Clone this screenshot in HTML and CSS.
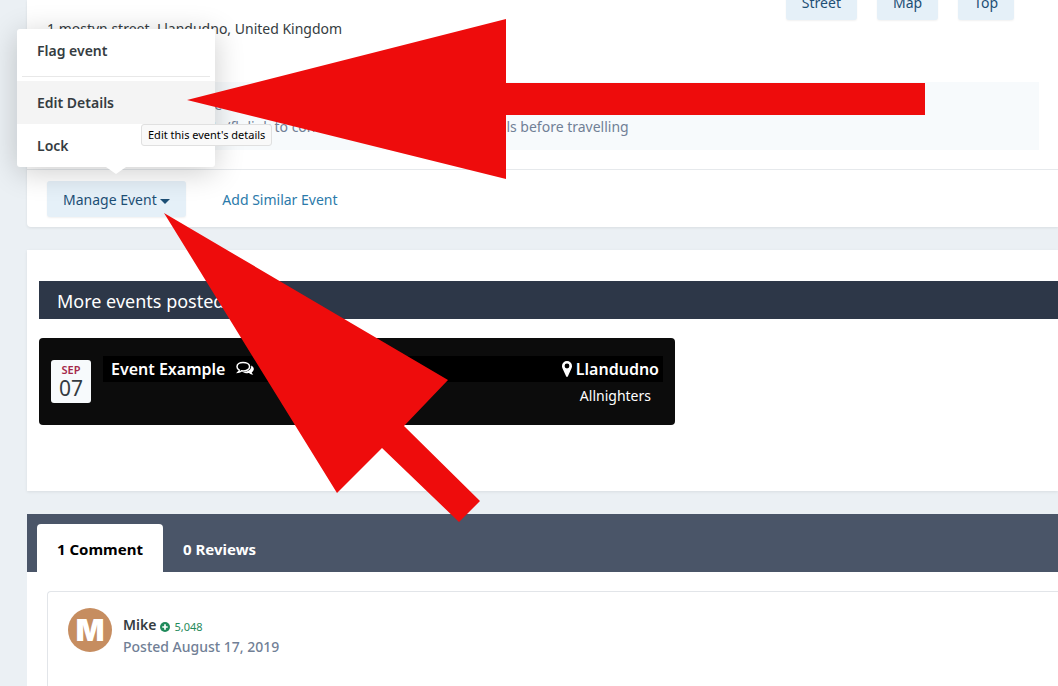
FILE: index.html
```html
<!DOCTYPE html>
<html lang="en">
	<head>
		<meta charset="UTF-8" />
		<meta name="viewport" content="width=device-width, initial-scale=1.0" />
		<title>Event Example</title>
		<link rel="stylesheet" href="styles.css">
	</head>
	<body>
		<main class="page">
			<section class="panel event">
				<nav class="links">
					<a class="button" href="#street">Street</a>
					<a class="button" href="#map">Map</a>
					<a class="button" href="#top">Top</a>
				</nav>
				<p class="address">1 mostyn street, Llandudno, United Kingdom</p>
				<div class="notice">
					<p>Events can change or be cancelled</p>
					<p>Please check the website/fb link to confirm the event or venue details before travelling</p>
				</div>
				<div class="event-footer">
					<div class="manage">
						<button class="button" type="button">Manage Event <span class="caret"></span></button>
						<div class="menu">
							<a href="#flag">Flag event</a>
							<hr />
							<a class="active" href="#edit">Edit Details</a>
							<a href="#lock">Lock</a>
							<span class="tooltip">Edit this event's details</span>
						</div>
					</div>
					<a class="similar" href="#similar">Add Similar Event</a>
				</div>
			</section>

			<section class="panel more">
				<h2>More events posted by Mike</h2>
				<article class="card">
					<time class="date" datetime="09-07"><span class="month">SEP</span><span class="day">07</span></time>
					<div class="card-body">
						<div class="card-title">
							<a href="#event">Event Example</a>
							<svg class="chat" viewBox="0 0 18 16">
								<path d="M7 1.500C3.600 1.500 1 3.300 1 5.700c0 1.400.9 2.600 2.300 3.400-.2.900-.7 1.600-1.300 2.200 1.500-.1 2.700-.7 3.600-1.500 4.500.6 8-1.400 8-4.100C13.600 3.300 10.800 1.500 7 1.500z" fill="none" stroke="#fff" stroke-width="1.500" />
								<path d="M15.200 4.500c1.600.8 2.600 2 2.600 3.500 0 1.400-.8 2.500-2.100 3.300.2.900.8 1.700 1.500 2.400-1.700 0-3.100-.6-4.100-1.600-2.400.3-4.700-.1-6.300-1.200 4.400.2 8.900-1.800 8.400-6.400z" fill="#fff" />
							</svg>
							<span>1</span>
							<svg class="pin" viewBox="0 0 10 16">
								<path fill-rule="evenodd" d="M5 0a5 5 0 0 0-5 5c0 1.300.3 2 .8 3l3.300 7.300c.4.900 1.400.9 1.800 0L9.200 8c.5-1 .8-1.700.8-3a5 5 0 0 0-5-5zm0 2.600a2.400 2.400 0 1 1 0 4.800 2.400 2.400 0 0 1 0-4.800z" fill="#fff" />
							</svg>
							<span>Llandudno</span>
						</div>
						<p class="category">Allnighters</p>
					</div>
				</article>
			</section>

			<section class="comments">
				<div class="tabs">
					<button class="tab selected" type="button">1 Comment</button>
					<button class="tab" type="button">0 Reviews</button>
				</div>
				<article class="comment">
					<span class="avatar">M</span>
					<div>
						<p class="author">
							<a href="#mike">Mike</a>
							<svg class="plus" viewBox="0 0 10 10">
								<circle cx="5" cy="5" r="5" fill="#1f8a5b" />
								<path d="M5 2.300v5.400M2.300 5h5.400" stroke="#fff" stroke-width="1.700" />
							</svg>
							<span class="points">5,048</span>
						</p>
						<p class="posted">Posted August 17, 2019</p>
					</div>
				</article>
			</section>
		</main>

		<!-- pointers to the menu and its button -->
		<svg class="arrows" width="1058" height="686" viewBox="0 0 1058 686">
			<path d="M187 100L506 19V83H925V115H506V179Z" />
			<path d="M164 213L448 380L404 426L480 501L459 522L382 448L337 493Z" />
		</svg>
	</body>
</html>
```
FILE: styles.css
```css
* {
	box-sizing: border-box;
}
body {
	margin: 0;
	height: 100vh;
	position: relative;
	overflow: hidden;
	background: #ebf0f4;
	color: #353c41;
	font-family: "Noto Sans", "Open Sans", sans-serif;
	font-size: 14px;
	line-height: 22px;
}
p,
h2 {
	margin: 0;
}
a {
	color: inherit;
	text-decoration: none;
}
button {
	border: 0;
	font: inherit;
	cursor: pointer;
}
.page {
	height: 100%;
	margin-left: 27px;
	display: flex;
	flex-direction: column;
	gap: 23px;
}
.panel {
	background: #fff;
	flex: none;
	box-shadow: 0 1px 3px rgba(0, 0, 0, 0.08);
}
.event {
	border-radius: 0 0 0 4px;
}
.links {
	display: flex;
	justify-content: flex-end;
	gap: 20px;
	margin: -16px 44px 0 0;
}
.button {
	display: block;
	height: 36px;
	padding: 0 16px;
	border-radius: 3px;
	background: #e5f0f8;
	color: #1d4f75;
	line-height: 38px;
	white-space: nowrap;
	box-shadow: 0 1px 2px rgba(0, 0, 0, 0.06);
}
.address {
	padding: 0 20px;
	line-height: 18px;
}
.notice {
	margin: 44px 19px 0 20px;
	padding: 12px 15px;
	background: #f7fafc;
	color: #718096;
	white-space: nowrap;
}
.event-footer {
	display: flex;
	align-items: center;
	gap: 36px;
	margin-top: 19px;
	padding: 11px 20px 10px;
	border-top: 1px solid #e6e9ec;
}
.manage {
	position: relative;
}
.caret {
	display: inline-block;
	vertical-align: middle;
	border: 5px solid transparent;
	border-top-color: currentColor;
	border-bottom: 0;
}
.similar {
	height: 36px;
	color: #2b7aaa;
	line-height: 38px;
}
.menu {
	position: absolute;
	left: -30px;
	bottom: 50px;
	width: 198px;
	border-radius: 3px;
	background: #fff;
	box-shadow: 0 5px 30px rgba(0, 0, 0, 0.2);
	font-weight: 600;
}
.menu::after {
	content: "";
	position: absolute;
	top: 100%;
	left: 89px;
	border: 10px solid transparent;
	border-top: 7px solid #fff;
	border-bottom: 0;
}
.menu a {
	display: block;
	padding: 0 20px;
	line-height: 43px;
}
.menu hr {
	margin: 4px 5px;
	border: 0;
	border-top: 1px solid #e8e8e8;
}
.menu .active {
	background: #f4f4f4;
}
.tooltip {
	position: absolute;
	left: 124px;
	top: 95px;
	z-index: 1;
	padding: 0 6px;
	border: 1px solid #e0e0e0;
	border-radius: 3px;
	background: #f9f9f9;
	color: #000;
	font-size: 11px;
	font-weight: 400;
	line-height: 20px;
	white-space: nowrap;
}
.more {
	padding: 31px 0 66px 12px;
}
.more h2 {
	height: 38px;
	margin-bottom: 19px;
	padding: 0 18px;
	background: #2d3748;
	color: #fff;
	font-size: 18px;
	font-weight: 400;
	line-height: 40px;
}
.card {
	display: flex;
	gap: 12px;
	max-width: 636px;
	height: 87px;
	padding: 18px 12px;
	border-radius: 4px;
	background: #0c0c0c;
	color: #fff;
}
.date {
	width: 40px;
	height: 43px;
	margin-top: 4px;
	border-radius: 3px;
	background: #f7fafc;
	color: #353c41;
	text-align: center;
}
.month,
.day {
	display: block;
}
.month {
	padding-top: 2px;
	color: #a5294a;
	font-size: 11px;
	font-weight: 600;
	line-height: 16px;
}
.day {
	font-size: 21px;
	line-height: 21px;
}
.card-body {
	flex: 1;
}
.card-title {
	display: flex;
	align-items: center;
	gap: 4px;
	height: 26px;
	padding: 0 4px 0 8px;
	background: #000;
	font-size: 16px;
	font-weight: 600;
	line-height: 28px;
}
.chat {
	width: 18px;
	height: 16px;
	margin: 0 2px 0 7px;
}
.pin {
	width: 10px;
	height: 16px;
	margin-left: auto;
}
.category {
	padding: 3px 12px;
	text-align: right;
}
.comments {
	flex: 1;
	display: flex;
	flex-direction: column;
	background: #fff;
}
.tabs {
	display: flex;
	padding: 10px 10px 0;
	background: #4a5568;
}
.tab {
	height: 48px;
	padding: 1px 20px 0;
	border-radius: 4px 4px 0 0;
	background: none;
	color: #fff;
	font-size: 15px;
	font-weight: 700;
}
.tab.selected {
	background: #fff;
	color: #000;
}
.comment {
	display: flex;
	flex: 1;
	gap: 11px;
	margin: 19px 0 0 20px;
	padding: 16px 20px;
	border: 1px solid #e2e5e9;
	border-width: 1px 0 0 1px;
	border-radius: 4px 0 0 0;
	font-weight: 600;
}
.avatar {
	width: 44px;
	height: 44px;
	border-radius: 50%;
	background: #c68d60;
	color: #fff;
	font-family: Inter, sans-serif;
	font-size: 30px;
	font-weight: 900;
	line-height: 44px;
	text-align: center;
}
.author {
	display: flex;
	align-items: center;
	gap: 4px;
	padding-top: 6px;
}
.plus {
	width: 10px;
	height: 10px;
	margin-top: 3px;
}
.points {
	margin-top: 3px;
	color: #1f8a5b;
	font-size: 11px;
	font-weight: 400;
	line-height: 16px;
}
.posted {
	color: #718096;
	font-weight: 500;
}
.arrows {
	position: absolute;
	left: 0;
	top: 0;
	fill: #ee0c0c;
	pointer-events: none;
}
```
